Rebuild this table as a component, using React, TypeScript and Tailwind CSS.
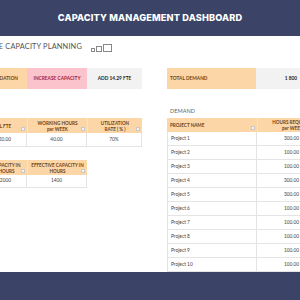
const font = { fontFamily: "Lato, 'Open Sans', sans-serif" };

const projects = [
  ["Project 1", "300.00"],
  ["Project 2", "100.00"],
  ["Project 3", "100.00"],
  ["Project 4", "300.00"],
  ["Project 5", "300.00"],
  ["Project 6", "100.00"],
  ["Project 7", "100.00"],
  ["Project 8", "100.00"],
  ["Project 9", "100.00"],
  ["Project 10", "100.00"],
];

const Filter = () => (
  <span className="absolute right-[2px] bottom-[2px] w-[4px] h-[4px] border border-[#c9c9c9] bg-[#f4f4f4]" />
);

const Head = ({ children, className = "" }: { children: React.ReactNode; className?: string }) => (
  <div className={`relative flex items-center justify-center text-center bg-[#fdd6a8] text-[#6d4416] font-bold text-[4.6px] leading-[6px] ${className}`}>
    {children}
    <Filter />
  </div>
);

const Cell = ({ children, className = "" }: { children: React.ReactNode; className?: string }) => (
  <div className={`flex items-center justify-center bg-white text-[#444] text-[4.8px] border-b border-r border-[#e4e4e4] ${className}`}>
    {children}
  </div>
);

export default function App() {
  return (
    <div className="w-[300px] h-[300px] overflow-hidden bg-white flex flex-col" style={font}>
      <div className="h-[36px] shrink-0 bg-[#3b4467] flex items-center justify-center">
        <h1 className="text-white font-extrabold text-[9.2px] tracking-[0.15px]" style={{ fontFamily: "Inter, Lato, sans-serif" }}>
          CAPACITY MANAGEMENT DASHBOARD
        </h1>
      </div>

      <div className="flex-1 flex overflow-hidden">
        {/* left column */}
        <div className="ml-[-28px] w-[170px] shrink-0 flex flex-col">
          <div className="h-[22px] flex items-center">
            <span className="ml-[-7.5px] text-[7.4px] text-[#555] tracking-[0.15px] whitespace-nowrap">
              EFFECTIVE CAPACITY PLANNING
            </span>
            <span className="ml-[9px] flex items-end gap-[1px] mb-[-1px]">
              <span className="w-[4px] h-[4px] border border-[#888]" />
              <span className="w-[6px] h-[6px] border border-[#888]" />
              <span className="w-[9px] h-[8px] border border-[#888]" />
            </span>
          </div>

          <div className="mt-[10px] h-[21px] flex text-[4.8px] font-bold">
            <div className="w-[55px] bg-[#fdd6a8] text-[#6d4416] flex items-center justify-end pr-[9px]">RECOMMENDATION</div>
            <div className="w-[60px] bg-[#fbc3cb] text-[#a8213c] flex items-center justify-center">INCREASE CAPACITY</div>
            <div className="w-[55px] bg-[#f2f2f2] text-[#222] flex items-center justify-center">ADD 14.29 FTE</div>
          </div>

          <div className="mt-[29px] flex flex-col w-[170px]">
            <div className="flex h-[15px]">
              <Head className="w-[55px]">TOTAL FTE</Head>
              <Head className="w-[60px] border-l border-[#f6e3cc]">WORKING HOURS<br />per WEEK</Head>
              <Head className="w-[55px] border-l border-[#f6e3cc]">UTILIZATION<br />RATE ( % )</Head>
            </div>
            <div className="flex h-[14px]">
              <Cell className="w-[55px] !justify-end pr-[15px]">20.00</Cell>
              <Cell className="w-[60px]">40.00</Cell>
              <Cell className="w-[55px]">70%</Cell>
            </div>
          </div>

          <div className="mt-[13px] flex flex-col w-[115px]">
            <div className="flex h-[15px]">
              <Head className="w-[55px] pl-[14px]">CAPACITY IN<br />HOURS</Head>
              <Head className="w-[60px] border-l border-[#f6e3cc]">EFFECTIVE CAPACITY IN<br />HOURS</Head>
            </div>
            <div className="flex h-[13px]">
              <Cell className="w-[55px] !justify-end pr-[15px]">2000</Cell>
              <Cell className="w-[60px]">1400</Cell>
            </div>
          </div>
        </div>

        {/* right column */}
        <div className="ml-[25px] w-[170px] shrink-0 flex flex-col">
          <div className="h-[22px]" />
          <div className="mt-[10px] h-[21px] flex text-[4.8px] font-bold">
            <div className="w-[89px] bg-[#fdd6a8] text-[#6d4416] flex items-center pl-[3px]">TOTAL DEMAND</div>
            <div className="w-[44px] bg-[#f2f2f2] text-[#222] flex items-center justify-end pr-[3px]">1 800</div>
          </div>
          <div className="mt-[16px] h-[13px] flex items-center pl-[3px] text-[5.6px] text-[#666]">DEMAND</div>
          <div className="flex h-[14px]">
            <Head className="w-[90px] !justify-start pl-[3px]">PROJECT NAME</Head>
            <Head className="w-[70px] border-l border-[#f6e3cc]">HOURS REQUIRED<br />per WEEK</Head>
          </div>
          {projects.map(([name, hours]) => (
            <div key={name} className="flex h-[14px]">
              <Cell className="w-[90px] !justify-start pl-[3px] border-l">{name}</Cell>
              <Cell className="w-[70px]">{hours}</Cell>
            </div>
          ))}
        </div>
      </div>

      <div className="h-[28px] shrink-0 bg-[#3b4467]" />
    </div>
  );
}
